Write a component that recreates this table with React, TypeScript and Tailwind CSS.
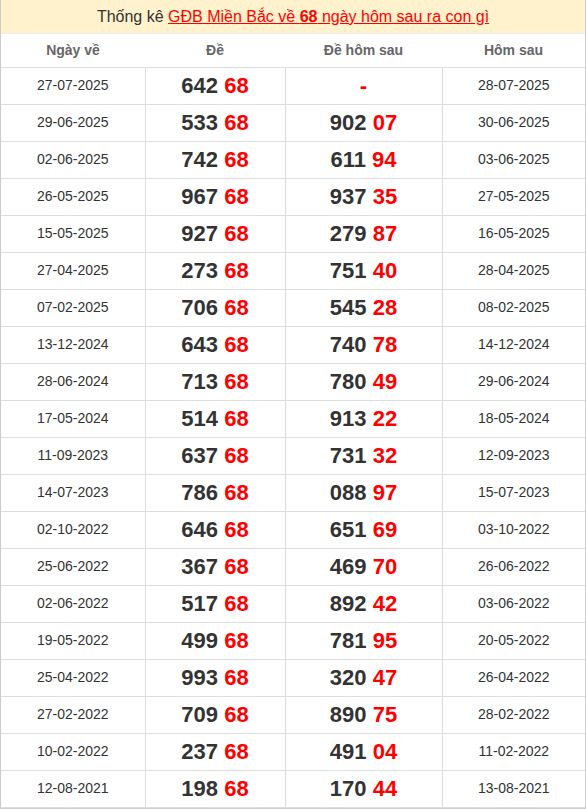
import React from 'react';

type Row = { date: string; de: string; next: string | null; nextDate: string };

const rows: Row[] = [
  { date: '27-07-2025', de: '642', next: null, nextDate: '28-07-2025' },
  { date: '29-06-2025', de: '533', next: '902 07', nextDate: '30-06-2025' },
  { date: '02-06-2025', de: '742', next: '611 94', nextDate: '03-06-2025' },
  { date: '26-05-2025', de: '967', next: '937 35', nextDate: '27-05-2025' },
  { date: '15-05-2025', de: '927', next: '279 87', nextDate: '16-05-2025' },
  { date: '27-04-2025', de: '273', next: '751 40', nextDate: '28-04-2025' },
  { date: '07-02-2025', de: '706', next: '545 28', nextDate: '08-02-2025' },
  { date: '13-12-2024', de: '643', next: '740 78', nextDate: '14-12-2024' },
  { date: '28-06-2024', de: '713', next: '780 49', nextDate: '29-06-2024' },
  { date: '17-05-2024', de: '514', next: '913 22', nextDate: '18-05-2024' },
  { date: '11-09-2023', de: '637', next: '731 32', nextDate: '12-09-2023' },
  { date: '14-07-2023', de: '786', next: '088 97', nextDate: '15-07-2023' },
  { date: '02-10-2022', de: '646', next: '651 69', nextDate: '03-10-2022' },
  { date: '25-06-2022', de: '367', next: '469 70', nextDate: '26-06-2022' },
  { date: '02-06-2022', de: '517', next: '892 42', nextDate: '03-06-2022' },
  { date: '19-05-2022', de: '499', next: '781 95', nextDate: '20-05-2022' },
  { date: '25-04-2022', de: '993', next: '320 47', nextDate: '26-04-2022' },
  { date: '27-02-2022', de: '709', next: '890 75', nextDate: '28-02-2022' },
  { date: '10-02-2022', de: '237', next: '491 04', nextDate: '11-02-2022' },
  { date: '12-08-2021', de: '198', next: '170 44', nextDate: '13-08-2021' },
];

const Num: React.FC<{ head: string; tail: string }> = ({ head, tail }) => (
  <span className="text-[22px] font-bold">
    <span className="text-[#333]">{head}</span> <span className="text-[#f00]">{tail}</span>
  </span>
);

export default function App() {
  return (
    <div className="w-[586px] bg-white font-['Liberation_Sans',Arial,sans-serif]">
      <div className="border-x border-b border-[#ccc]">
        {/* Title */}
        <div className="h-[34px] bg-[#fff2cc] border-b border-[#eee] flex items-center justify-center text-[16px] text-[#333]">
          <span>
            Thống kê{' '}
            <a href="#" className="text-[#f00] underline">
              GĐB Miền Bắc về <b>68</b> ngày hôm sau ra con gì
            </a>
          </span>
        </div>

        <table className="w-full table-fixed border-collapse text-center">
          <colgroup>
            <col className="w-[144px]" />
            <col className="w-[140px]" />
            <col className="w-[157px]" />
            <col />
          </colgroup>
          <thead>
            <tr className="h-[33px] text-[14px] font-bold text-[#666]">
              <th className="border-b border-[#ddd] font-bold">Ngày về</th>
              <th className="border-b border-[#ddd] font-bold">Đề</th>
              <th className="border-b border-[#ddd] font-bold">Đề hôm sau</th>
              <th className="border-b border-[#ddd] font-bold">Hôm sau</th>
            </tr>
          </thead>
          <tbody>
            {rows.map((r) => {
              const [h, t] = r.next ? r.next.split(' ') : ['', ''];
              return (
                <tr key={r.date} className="h-[37px]">
                  <td className="border border-l-0 border-[#ddd] text-[14px] text-[#333]">{r.date}</td>
                  <td className="border border-[#ddd]">
                    <Num head={r.de} tail="68" />
                  </td>
                  <td className="border border-[#ddd]">
                    {r.next ? (
                      <Num head={h} tail={t} />
                    ) : (
                      <span className="text-[22px] font-bold text-[#f00]">-</span>
                    )}
                  </td>
                  <td className="border border-r-0 border-[#ddd] text-[14px] text-[#333]">{r.nextDate}</td>
                </tr>
              );
            })}
          </tbody>
        </table>
      </div>
    </div>
  );
}
